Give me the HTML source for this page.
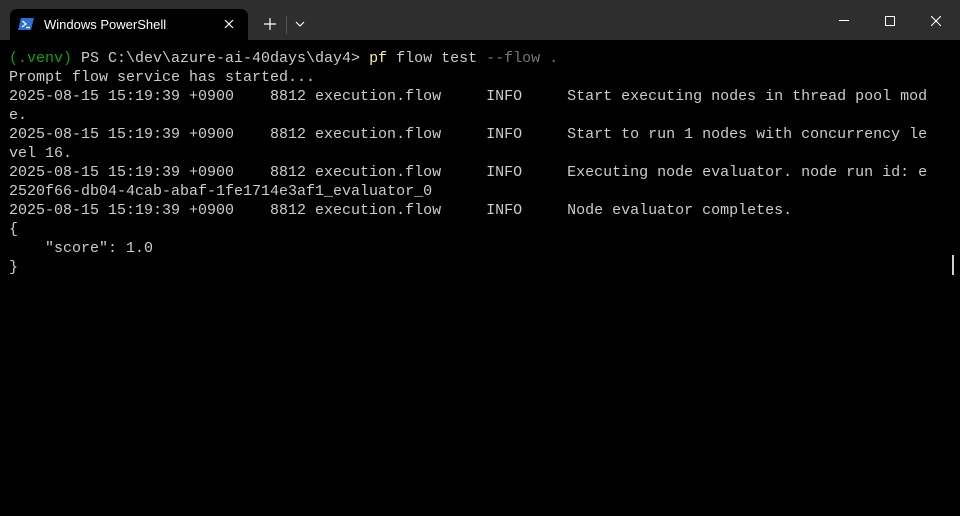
<!DOCTYPE html>
<html><head><style>
html,body{margin:0;padding:0;background:#000;width:960px;height:516px;overflow:hidden}
.bar{position:absolute;left:0;top:0;width:960px;height:40px;background:#2e2e2e}
.tab{position:absolute;left:10px;top:9px;width:238px;height:31px;background:#000;border-radius:7px 7px 0 0}
.tt{position:absolute;left:44px;top:17px;font:13px "Liberation Sans",sans-serif;color:#fff}
pre{position:absolute;left:9px;top:49px;margin:0;font:15px/19px "Liberation Mono",monospace;color:#cccccc}
.g{color:#13a10e}.y{color:#f9f1a5}.d{color:#767676}
</style></head><body>
<div class="bar"></div>
<div class="tab"></div>
<svg style="position:absolute;left:18px;top:17px" width="16" height="14" viewBox="0 0 16 14"><path d="M3 1h13l-3 12H0z" fill="#2c6fd6"/><path d="M4.5 4l3.5 3-4 3" stroke="#fff" stroke-width="1.3" fill="none"/><path d="M8 10.5h4" stroke="#fff" stroke-width="1.3"/></svg>
<div class="tt">Windows PowerShell</div>
<svg style="position:absolute;left:224px;top:19px" width="10" height="10"><path d="M1 1l8 8M9 1l-8 8" stroke="#fff" stroke-width="1.2"/></svg>
<svg style="position:absolute;left:264px;top:18px" width="12" height="12"><path d="M6 0v12M0 6h12" stroke="#fff" stroke-width="1.2"/></svg>
<div style="position:absolute;left:286px;top:16px;width:1px;height:18px;background:#555"></div>
<svg style="position:absolute;left:295px;top:21px" width="10" height="6"><path d="M1 1l4 4 4-4" stroke="#fff" stroke-width="1.1" fill="none"/></svg>
<div style="position:absolute;left:839px;top:20px;width:10px;height:1px;background:#fff"></div>
<div style="position:absolute;left:885px;top:16px;width:8px;height:8px;border:1px solid #fff"></div>
<svg style="position:absolute;left:931px;top:16px" width="10" height="10"><path d="M0 0l10 10M10 0l-10 10" stroke="#fff" stroke-width="1.1"/></svg>
<div style="position:absolute;left:952px;top:255px;width:2px;height:20px;background:#cfcfcf"></div>
<pre><span class="g">(.venv)</span> PS C:\dev\azure-ai-40days\day4&gt; <span class="y">pf</span> flow test <span class="d">--flow .</span>
Prompt flow service has started...
2025-08-15 15:19:39 +0900    8812 execution.flow     INFO     Start executing nodes in thread pool mod
e.
2025-08-15 15:19:39 +0900    8812 execution.flow     INFO     Start to run 1 nodes with concurrency le
vel 16.
2025-08-15 15:19:39 +0900    8812 execution.flow     INFO     Executing node evaluator. node run id: e
2520f66-db04-4cab-abaf-1fe1714e3af1_evaluator_0
2025-08-15 15:19:39 +0900    8812 execution.flow     INFO     Node evaluator completes.
{
    "score": 1.0
}</pre>
</body></html>
